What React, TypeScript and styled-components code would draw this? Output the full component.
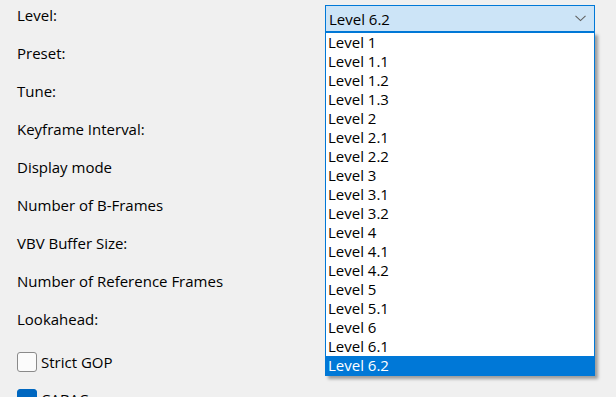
import React from 'react'
import styled, { createGlobalStyle } from 'styled-components'

const GlobalStyle = createGlobalStyle`
  html, body {
    margin: 0;
    padding: 0;
    background: #f0f0f0;
  }
  body {
    font-family: "Open Sans", "Noto Sans", sans-serif;
    font-size: 15px;
    color: #000;
    overflow: hidden;
  }
`

const Page = styled.div`
  width: 616px;
  height: 397px;
  overflow: hidden;
  box-sizing: border-box;
  padding: 5px 0 0 17px;
  display: flex;
  flex-direction: column;
  gap: 12px;
`

const FieldRow = styled.div`
  display: grid;
  grid-template-columns: 308px 270px;
  align-items: start;
  height: 26px;
`

const Label = styled.span`
  line-height: 20px;
  white-space: nowrap;
`

const ComboWrap = styled.div`
  position: relative;
  height: 27px;
`

const Combo = styled.div<{ $open?: boolean }>`
  box-sizing: border-box;
  height: 27px;
  display: flex;
  align-items: center;
  justify-content: space-between;
  padding: 0 8px 0 3px;
  border: 1px solid ${p => (p.$open ? '#0078d7' : '#7a7a7a')};
  background: ${p => (p.$open ? '#cce4f7' : '#e1e1e1')};
  line-height: 20px;
`

const Chevron = () => (
  <svg width="11" height="7" viewBox="0 0 11 7">
    <path d="M0.5 0.8 L5.5 5.6 L10.5 0.8" fill="none" stroke="#606060" strokeWidth="1.1" />
  </svg>
)

const Popup = styled.ul`
  position: absolute;
  top: 27px;
  left: 0;
  width: 270px;
  box-sizing: border-box;
  margin: 0;
  padding: 0;
  list-style: none;
  background: #fff;
  border: 1px solid #0078d7;
  box-shadow: 3px 3px 3px rgba(0, 0, 0, 0.35);
  z-index: 10;
`

const Option = styled.li<{ $selected?: boolean }>`
  height: 19px;
  line-height: 19px;
  padding-left: 2px;
  background: ${p => (p.$selected ? '#0078d7' : 'transparent')};
  color: ${p => (p.$selected ? '#fff' : '#000')};
  white-space: nowrap;
`

const CheckRow = styled.label`
  display: flex;
  align-items: flex-start;
  gap: 4px;
  height: 26px;
  padding-top: 5px;
  box-sizing: border-box;
  line-height: 20px;
`

const Box = styled.span<{ $checked?: boolean }>`
  box-sizing: border-box;
  width: 20px;
  height: 20px;
  border-radius: 3px;
  border: 1px solid ${p => (p.$checked ? '#0067c0' : '#8a8a8a')};
  background: ${p => (p.$checked ? '#0067c0' : '#fbfbfb')};
`

const levels = [
  'Level 1', 'Level 1.1', 'Level 1.2', 'Level 1.3', 'Level 2', 'Level 2.1', 'Level 2.2',
  'Level 3', 'Level 3.1', 'Level 3.2', 'Level 4', 'Level 4.1', 'Level 4.2', 'Level 5',
  'Level 5.1', 'Level 6', 'Level 6.1', 'Level 6.2',
]

const fields = [
  'Preset:', 'Tune:', 'Keyframe Interval:', 'Display mode', 'Number of B-Frames',
  'VBV Buffer Size:', 'Number of Reference Frames', 'Lookahead:',
]

export default function App() {
  const selected = 'Level 6.2'
  return (
    <>
      <GlobalStyle />
      <Page>
        <FieldRow>
          <Label>Level:</Label>
          <ComboWrap>
            <Combo $open>
              <span>{selected}</span>
              <Chevron />
            </Combo>
            <Popup>
              {levels.map(l => (
                <Option key={l} $selected={l === selected}>{l}</Option>
              ))}
            </Popup>
          </ComboWrap>
        </FieldRow>
        {fields.map(f => (
          <FieldRow key={f}>
            <Label>{f}</Label>
            <ComboWrap>
              <Combo>
                <span />
                <Chevron />
              </Combo>
            </ComboWrap>
          </FieldRow>
        ))}
        <CheckRow>
          <Box />
          <span>Strict GOP</span>
        </CheckRow>
        <CheckRow>
          <Box $checked />
          <span>CABAC</span>
        </CheckRow>
      </Page>
    </>
  )
}
